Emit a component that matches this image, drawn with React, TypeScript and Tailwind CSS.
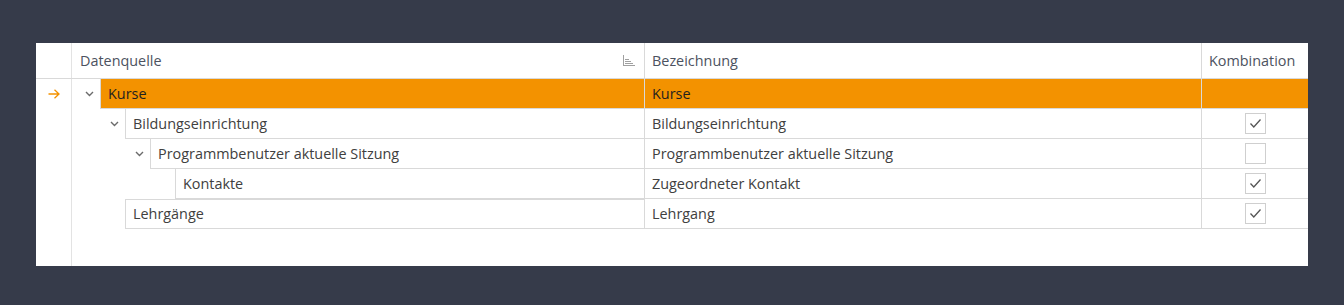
import React from "react";

type Row = {
  id: string;
  name: string;
  label: string;
  level: number;
  expanded?: boolean;
  checked?: boolean;
  topBorder?: boolean;
};

const ROWS: Row[] = [
  { id: "kurse", name: "Kurse", label: "Kurse", level: 0, expanded: true },
  { id: "bildung", name: "Bildungseinrichtung", label: "Bildungseinrichtung", level: 1, expanded: true, checked: true },
  { id: "prog", name: "Programmbenutzer aktuelle Sitzung", label: "Programmbenutzer aktuelle Sitzung", level: 2, expanded: true, checked: false },
  { id: "kontakte", name: "Kontakte", label: "Zugeordneter Kontakt", level: 3, checked: true },
  { id: "lehr", name: "Lehrgänge", label: "Lehrgang", level: 1, checked: true, topBorder: true },
];

const INDENT = [28, 53, 78, 103];

function Chevron() {
  return (
    <svg width="9" height="6" viewBox="0 0 9 6" className="text-[#6b6b6b]">
      <polyline points="1,1 4.5,4.5 8,1" fill="none" stroke="currentColor" strokeWidth="1.4" />
    </svg>
  );
}

function FocusArrow() {
  return (
    <svg width="12" height="10" viewBox="0 0 12 10" className="text-[#f39200]">
      <path d="M0.5 5 H11 M6.5 0.8 L11 5 L6.5 9.2" fill="none" stroke="currentColor" strokeWidth="1.3" />
    </svg>
  );
}

function SortGlyph() {
  return (
    <svg width="12" height="12" viewBox="0 0 12 12" className="text-[#a0a0a0]">
      <rect x="0" y="0" width="1" height="11" fill="currentColor" />
      <rect x="2" y="4" width="4" height="1" fill="currentColor" />
      <rect x="2" y="6" width="6" height="1" fill="currentColor" />
      <rect x="2" y="8" width="8" height="1" fill="currentColor" />
      <rect x="0" y="10" width="12" height="1" fill="currentColor" />
    </svg>
  );
}

function CheckBox({ checked }: { checked: boolean }) {
  return (
    <div className="flex h-[21px] w-[21px] items-center justify-center border border-[#cfcfcf] bg-white">
      {checked && (
        <svg width="13" height="11" viewBox="0 0 13 11">
          <polyline points="1.5,5.5 4.8,9 11.5,1.5" fill="none" stroke="#555" strokeWidth="1.3" />
        </svg>
      )}
    </div>
  );
}

function TreeRow({ row, focused }: { row: Row; focused: boolean }) {
  const fill = focused ? "bg-[#f39200] text-[#1f1f1f]" : "bg-white text-[#404040]";
  const indent = INDENT[row.level];
  return (
    <div className="flex h-[30px]">
      <div className="flex w-[36px] shrink-0 items-center justify-center border-r border-[#e3e3e3]">
        {focused && <FocusArrow />}
      </div>
      <div className="flex w-[572px] shrink-0">
        <div className="flex shrink-0 items-center justify-end pr-[6px]" style={{ width: indent }}>
          {row.expanded && <Chevron />}
        </div>
        <div
          className={`flex flex-1 items-center border-b border-l border-[#d9d9d9] pl-[7px] ${fill} ${
            row.topBorder ? "border-t" : ""
          }`}
        >
          {row.name}
        </div>
      </div>
      <div className={`flex w-[557px] shrink-0 items-center border-b border-l border-[#d9d9d9] pl-[7px] ${fill}`}>
        {row.label}
      </div>
      <div className={`flex w-[107px] shrink-0 items-center justify-center border-b border-l border-[#d9d9d9] ${fill}`}>
        {!focused && <CheckBox checked={!!row.checked} />}
      </div>
    </div>
  );
}

export default function App() {
  return (
    <div className="h-[305px] w-[1344px] bg-[#363b4a] pl-[36px] pt-[43px] font-['Open_Sans',sans-serif] text-[14.4px]">
      <div className="flex h-[223px] w-[1272px] flex-col bg-white">
        <div className="flex h-[36px] border-b border-[#d9d9d9] text-[#4c5260]">
          <div className="w-[36px] shrink-0 border-r border-[#e3e3e3]" />
          <div className="flex w-[572px] shrink-0 items-center justify-between pl-[8px] pr-[9px]">
            <span>Datenquelle</span>
            <SortGlyph />
          </div>
          <div className="flex w-[557px] shrink-0 items-center border-l border-[#d9d9d9] pl-[7px]">Bezeichnung</div>
          <div className="flex w-[107px] shrink-0 items-center border-l border-[#d9d9d9] pl-[7px]">Kombination</div>
        </div>
        {ROWS.map((row, i) => (
          <TreeRow key={row.id} row={row} focused={i === 0} />
        ))}
        <div className="flex flex-1">
          <div className="w-[36px] shrink-0 border-r border-[#e3e3e3]" />
        </div>
      </div>
    </div>
  );
}
